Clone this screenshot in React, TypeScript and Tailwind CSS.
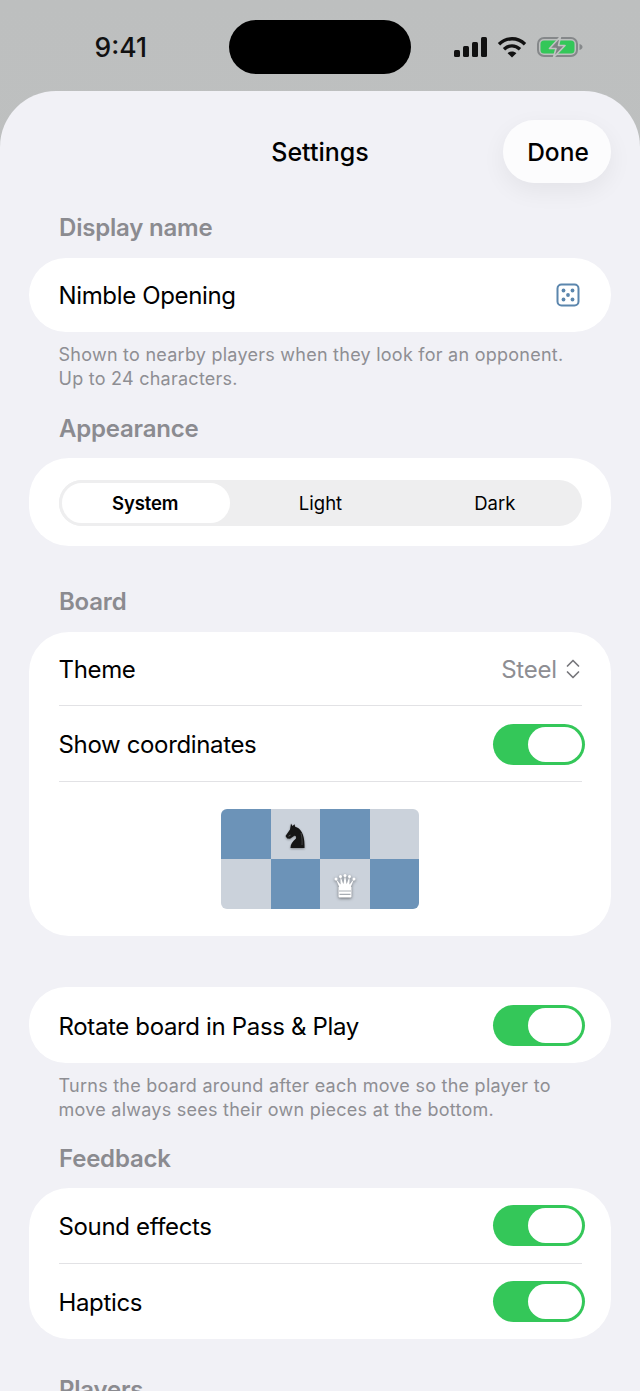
const sans = "font-['Inter','Noto_Sans',sans-serif]"

const Toggle = () => (
  <div className="flex h-[41px] w-[92px] shrink-0 justify-end rounded-full bg-[#34c759] p-[3px]">
    <div className="h-[35px] w-[54px] rounded-full bg-white" />
  </div>
)

const Label = ({ children, className = "" }: { children: string; className?: string }) => (
  <h2 className={`pl-[30px] text-[24px] leading-[30px] font-semibold tracking-[-0.2px] text-[#8b8b90] ${className}`}>
    {children}
  </h2>
)

const Note = ({ lines }: { lines: string[] }) => (
  <p className="mt-[11px] pl-[29.5px] text-[18px] leading-[24px] tracking-[0.25px] text-[#8e8e93]">
    {lines.map((line) => (
      <span key={line} className="block">
        {line}
      </span>
    ))}
  </p>
)

const Title = ({ children, className = "pt-[3px]" }: { children: string; className?: string }) => (
  <span className={`text-[24px] tracking-[-0.35px] text-black ${className}`}>{children}</span>
)

const Row = ({ title, children, className = "h-[75px]" }: { title: string; children: React.ReactNode; className?: string }) => (
  <div className={`mr-[29px] ml-[29.5px] flex items-center justify-between ${className}`}>
    <Title>{title}</Title>
    {children}
  </div>
)

const Knight = () => (
  <svg className="mt-[4px] drop-shadow-[0_1px_1px_rgba(0,0,0,0.35)]" width="20" height="26" viewBox="0 0 20 26">
    <path
      d="M6 0.5L7.5 3L9.5 1.2L10.2 3.8C15.5 5 19.5 11 19.5 22V25H5.5C5.5 21 7.5 18.5 11 15.5C11.5 13.5 10.5 12.2 9 13L5 15.8L2.2 15.5L0.5 13L5 6.5Z"
      fill="#151515"
    />
    <path d="M16 10C17 14 17.3 18 17 22" fill="none" stroke="#555" strokeWidth="0.7" />
    <path d="M3.5 13.2L5.5 12.2" fill="none" stroke="#777" strokeWidth="0.7" />
  </svg>
)

const Queen = () => (
  <svg className="mt-[4px] drop-shadow-[0_1px_1.5px_rgba(0,0,0,0.5)]" width="22" height="24" viewBox="0 0 22 24">
    <g fill="#fff">
      <circle cx="2" cy="5" r="1.5" />
      <circle cx="6.5" cy="2.5" r="1.5" />
      <circle cx="11" cy="1.6" r="1.5" />
      <circle cx="15.5" cy="2.5" r="1.5" />
      <circle cx="20" cy="5" r="1.5" />
      <path d="M2 5L5.2 13H16.8L20 5L15.5 10.5L15.5 2.5L12.7 10L11 1.6L9.3 10L6.5 2.5L6.5 10.5Z" />
      <rect x="4.5" y="12.5" width="13" height="11" rx="1" />
    </g>
    <path d="M5 17H17M5.5 20.3H16.5" stroke="#a8adb3" strokeWidth="1.2" />
  </svg>
)

const StatusIcons = () => (
  <div className="flex items-center">
    <svg width="33" height="20" viewBox="0 0 33 20" fill="#111">
      <rect x="0" y="13" width="6" height="7" rx="1.5" />
      <rect x="9" y="9" width="6" height="11" rx="1.5" />
      <rect x="18" y="5" width="6" height="15" rx="1.5" />
      <rect x="27" y="0" width="6" height="20" rx="1.5" />
    </svg>
    <svg className="ml-[10px]" width="30" height="22" viewBox="0 0 30 22" fill="none" stroke="#111" strokeWidth="3.4">
      <path d="M2 8.2C9.5 1 20.5 1 28 8.2" />
      <path d="M7 13.2C11.8 8.7 18.2 8.7 23 13.2" />
      <path d="M15 21.5L10.6 17.2C13 15 17 15 19.4 17.2Z" fill="#111" stroke="none" />
    </svg>
    <svg className="ml-[10px]" width="46" height="22" viewBox="0 0 46 22">
      <rect x="1" y="2" width="39" height="18" rx="6" fill="none" stroke="#85888a" strokeWidth="2" />
      <rect x="3.5" y="4.5" width="34" height="13" rx="3.5" fill="#34c759" />
      <path d="M42.5 8C44.5 8.6 45.5 9.7 45.5 11S44.5 13.4 42.5 14Z" fill="#85888a" />
      <path d="M23.5 0.5L12.5 12.5H19L16.5 21.5L28 9.5H21.5Z" fill="#7f8284" stroke="#c1c3c3" strokeWidth="1.6" strokeLinejoin="round" />
    </svg>
  </div>
)

const App = () => {
  const squares = [true, false, true, false, false, true, false, true]

  return (
    <div className={`h-[1391px] w-[640px] overflow-hidden bg-gradient-to-b from-[#bdbfbf] to-[#c2c4c4] ${sans}`}>
      <div className="grid h-[91px] grid-cols-[229px_182px_1fr] items-start pt-[20px]">
        <span className="pt-[10px] pr-[82px] text-right text-[26.5px] leading-[34px] font-[550] text-[#111]">9:41</span>
        <div className="h-[54px] rounded-[27px] bg-black" />
        <div className="pt-[16px] pl-[43px]">
          <StatusIcons />
        </div>
      </div>

      <div className="h-[1300px] rounded-t-[56px] bg-[#f1f1f6] px-[29px]">
        <header className="grid grid-cols-[1fr_auto_1fr] items-center pt-[29px]">
          <span />
          <span className="pt-[2px] text-[25px] font-[550] text-black">Settings</span>
          <button className="h-[63px] w-[108px] justify-self-end rounded-full bg-white/80 pt-[2px] pl-[2px] text-[24.5px] font-[550] text-black shadow-[0_8px_24px_rgba(0,0,0,0.06)]">
            Done
          </button>
        </header>

        <Label className="mt-[30px]">Display name</Label>
        <div className="mt-[15px] flex h-[74px] items-center justify-between rounded-[37px] bg-white pr-[30px] pl-[29.5px]">
          <Title className="pt-[1px]">Nimble Opening</Title>
          <svg className="mr-[1px]" width="24" height="24" viewBox="0 0 24 24" fill="#5b86ad">
            <rect x="1.5" y="1.5" width="21" height="21" rx="4" fill="none" stroke="#5b86ad" strokeWidth="2" />
            <circle cx="7.5" cy="7.5" r="1.9" />
            <circle cx="16.5" cy="7.5" r="1.9" />
            <circle cx="12" cy="12" r="1.9" />
            <circle cx="7.5" cy="16.5" r="1.9" />
            <circle cx="16.5" cy="16.5" r="1.9" />
          </svg>
        </div>
        <Note lines={["Shown to nearby players when they look for an opponent.", "Up to 24 characters."]} />

        <Label className="mt-[23px]">Appearance</Label>
        <div className="mt-[14px] h-[88px] rounded-[40px] bg-white pt-[22px] pr-[29px] pl-[30px]">
          <div className="grid h-[46px] grid-cols-3 items-center rounded-full bg-[#eeeeef] text-center text-[18.5px] text-black">
            <span className="flex h-[46px] items-center justify-center rounded-full border-[3px] border-[#eeeeef] bg-white pt-[1px] pr-[2px] font-semibold tracking-[-0.15px]">
              System
            </span>
            <span className="pt-[1px]">Light</span>
            <span className="pt-[1px]">Dark</span>
          </div>
        </div>

        <Label className="mt-[41px]">Board</Label>
        <div className="mt-[15px] h-[304px] rounded-[40px] bg-white">
          <Row title="Theme" className="h-[74px] border-b border-[#e2e2e5]">
            <span className="flex items-center gap-[9px] pr-[2px] text-[24px] tracking-[-0.2px] text-[#8e8e93]">
              <span className="pt-[3px]">Steel</span>
              <svg width="14" height="22" viewBox="0 0 14 22" fill="none" stroke="#77777c" strokeWidth="1.7" strokeLinecap="round" strokeLinejoin="round">
                <path d="M1.5 8L7 2.5L12.5 8" />
                <path d="M1.5 14L7 19.5L12.5 14" />
              </svg>
            </span>
          </Row>
          <Row title="Show coordinates" className="h-[76px] border-b border-[#e2e2e5]">
            <div className="mt-[1px] -mr-[3px]">
              <Toggle />
            </div>
          </Row>
          <div className="mx-auto mt-[27px] grid h-[100px] w-[198px] grid-cols-4 grid-rows-2 overflow-hidden rounded-[6px]">
            {squares.map((dark, i) => (
              <div key={i} className={`flex items-center justify-center ${dark ? "bg-[#6c93b8]" : "bg-[#cbd2db]"}`}>
                {i === 1 && <Knight />}
                {i === 6 && <Queen />}
              </div>
            ))}
          </div>
        </div>

        <div className="mt-[51px] flex h-[76px] items-center justify-between rounded-[37px] bg-white pr-[26px] pl-[29.5px]">
          <Title>Rotate board in Pass &amp; Play</Title>
          <Toggle />
        </div>
        <Note lines={["Turns the board around after each move so the player to", "move always sees their own pieces at the bottom."]} />

        <Label className="mt-[22px]">Feedback</Label>
        <div className="mt-[14px] h-[151px] rounded-[40px] bg-white">
          <Row title="Sound effects" className="h-[76px] border-b border-[#e2e2e5]">
            <div className="-mr-[3px]">
              <Toggle />
            </div>
          </Row>
          <Row title="Haptics">
            <div className="-mr-[3px]">
              <Toggle />
            </div>
          </Row>
        </div>

        <Label className="mt-[36px]">Players</Label>
      </div>
    </div>
  )
}

export default App
